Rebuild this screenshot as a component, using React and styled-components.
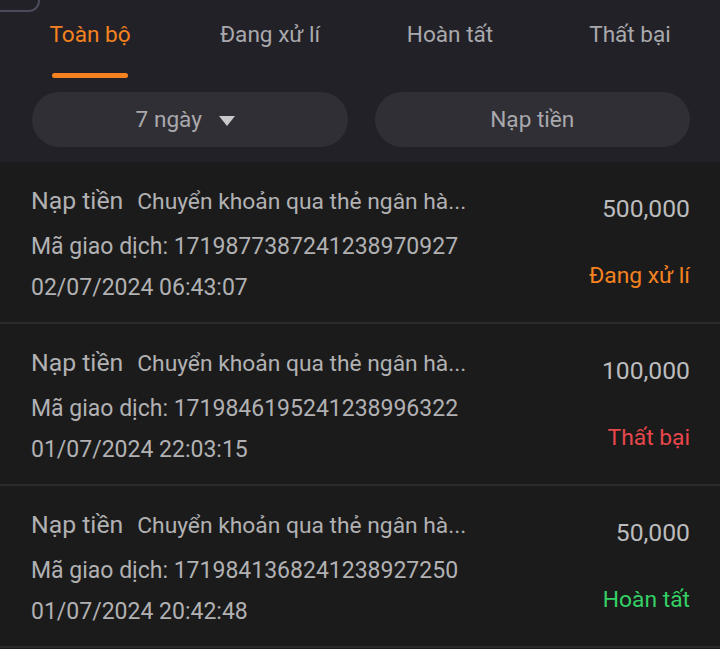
import React from "react";
import styled, { createGlobalStyle } from "styled-components";

const GlobalStyle = createGlobalStyle`
  html, body {
    margin: 0;
    padding: 0;
    background: #1b1b1b;
    font-family: Roboto, "Noto Sans", sans-serif;
  }
`;

const Page = styled.div`
  width: 720px;
  min-height: 649px;
  background: #1b1b1b;
  overflow: hidden;
`;

const Header = styled.div`
  position: relative;
  background: #222127;
  padding-bottom: 15px;
`;

const CornerFrame = styled.div`
  position: absolute;
  left: -12px;
  top: -30px;
  width: 48px;
  height: 38px;
  border: 2px solid #4a4c5b;
  border-radius: 11px;
`;

const Tabs = styled.div`
  display: grid;
  grid-template-columns: repeat(4, 1fr);
  padding-top: 12px;
`;

const Tab = styled.div`
  display: flex;
  flex-direction: column;
  align-items: center;
  font-size: 22.6px;
  line-height: 46px;
  color: ${(p) => (p.$active ? "#f5821f" : "#a9a9ad")};

  &::after {
    content: "";
    display: block;
    width: 76px;
    height: 5px;
    margin-top: 15px;
    border-radius: 3px;
    background: ${(p) => (p.$active ? "#f5821f" : "transparent")};
  }
`;

const Filters = styled.div`
  display: grid;
  grid-template-columns: 1fr 1fr;
  gap: 27px;
  padding: 14px 30px 0 32px;
`;

const FilterButton = styled.div`
  height: 55px;
  border-radius: 28px;
  background: #302f35;
  color: #a9a9ad;
  font-size: 22.6px;
  display: flex;
  align-items: center;
  justify-content: center;
  gap: 17px;
  padding-right: ${(p) => (p.$withCaret ? 9 : 0)}px;
`;

const Caret = styled.span`
  width: 0;
  height: 0;
  border-left: 8.5px solid transparent;
  border-right: 8.5px solid transparent;
  border-top: 10px solid #c9c9cc;
  margin-top: 2px;
`;

const List = styled.div`
  display: flex;
  flex-direction: column;
`;

const Item = styled.div`
  display: flex;
  justify-content: space-between;
  padding: 16px 30px 14px 31px;
  border-bottom: 2px solid #2a2a2b;
  background: #1b1b1b;
`;

const Info = styled.div`
  display: flex;
  flex-direction: column;
  color: #b1b1b3;
`;

const TitleRow = styled.div`
  display: flex;
  align-items: baseline;
  gap: 14px;
  height: 46px;
  line-height: 46px;
  white-space: nowrap;
`;

const Kind = styled.span`
  font-size: 24.8px;
`;

const Desc = styled.span`
  font-size: 22.8px;
`;

const Line = styled.div`
  font-size: 23px;
  line-height: 41px;
  white-space: nowrap;
  margin-top: ${(p) => p.$gapTop || 0}px;
`;

const Side = styled.div`
  display: flex;
  flex-direction: column;
  align-items: flex-end;
  padding-top: 16px;
  gap: 37px;
`;

const Amount = styled.div`
  font-size: 24.7px;
  line-height: 30px;
  color: #bcbcbe;
`;

const STATUS_COLORS = {
  pending: "#f58220",
  failed: "#e8474b",
  done: "#34d065",
};

const Status = styled.div`
  font-size: 22.8px;
  line-height: 30px;
  color: ${(p) => STATUS_COLORS[p.$kind]};
`;

const TABS = ["Toàn bộ", "Đang xử lí", "Hoàn tất", "Thất bại"];

const ROWS = [
  {
    amount: "500,000",
    code: "1719877387241238970927",
    time: "02/07/2024 06:43:07",
    status: "Đang xử lí",
    kind: "pending",
  },
  {
    amount: "100,000",
    code: "1719846195241238996322",
    time: "01/07/2024 22:03:15",
    status: "Thất bại",
    kind: "failed",
  },
  {
    amount: "50,000",
    code: "1719841368241238927250",
    time: "01/07/2024 20:42:48",
    status: "Hoàn tất",
    kind: "done",
  },
];

export default function App() {
  return (
    <Page>
      <GlobalStyle />
      <Header>
        <CornerFrame />
        <Tabs>
          {TABS.map((t, i) => (
            <Tab key={t} $active={i === 0}>
              {t}
            </Tab>
          ))}
        </Tabs>
        <Filters>
          <FilterButton $withCaret>
            7 ngày
            <Caret />
          </FilterButton>
          <FilterButton>Nạp tiền</FilterButton>
        </Filters>
      </Header>

      <List>
        {ROWS.map((r) => (
          <Item key={r.code}>
            <Info>
              <TitleRow>
                <Kind>Nạp tiền</Kind>
                <Desc>Chuyển khoản qua thẻ ngân hà...</Desc>
              </TitleRow>
              <Line $gapTop={2}>Mã giao dịch: {r.code}</Line>
              <Line>{r.time}</Line>
            </Info>
            <Side>
              <Amount>{r.amount}</Amount>
              <Status $kind={r.kind}>{r.status}</Status>
            </Side>
          </Item>
        ))}
      </List>
    </Page>
  );
}
